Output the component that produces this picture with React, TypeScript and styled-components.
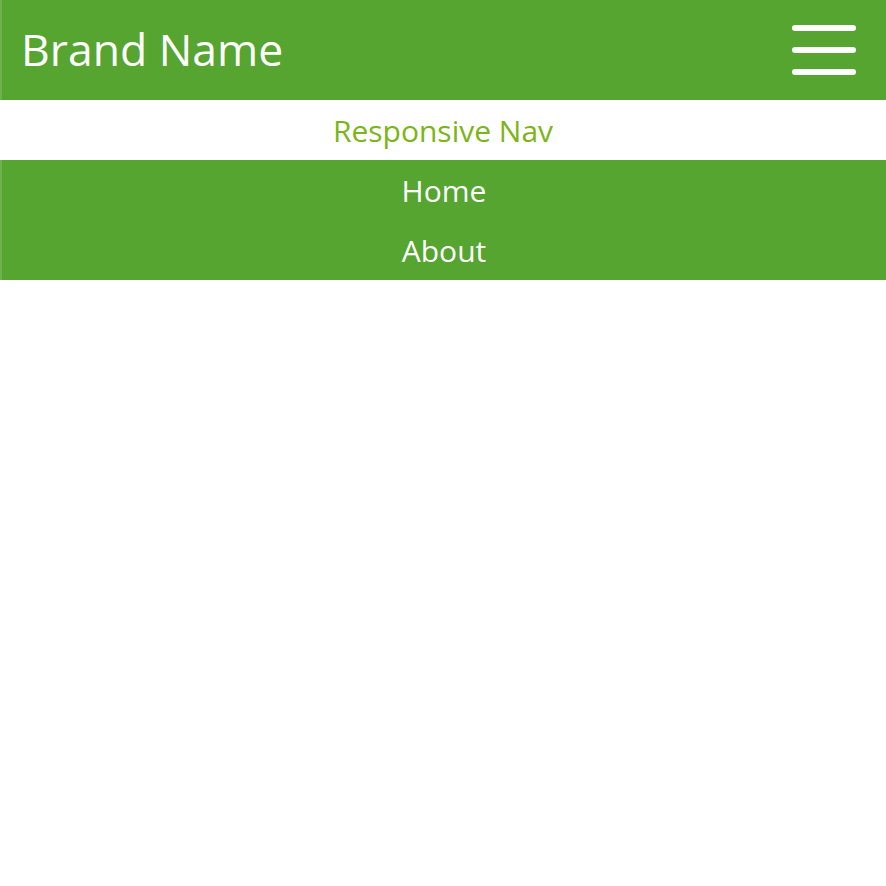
import React from "react";
import styled, { createGlobalStyle } from "styled-components";

const Global = createGlobalStyle`
  html, body { margin: 0; padding: 0; background: #ffffff; }
  body { font-family: "Open Sans", "DejaVu Sans", sans-serif; }
`;

const Header = styled.header`
  height: 100px;
  background: #55a530;
  display: flex;
  align-items: center;
  justify-content: space-between;
  padding: 0 30px 0 19px;
  border-left: 2px solid #6cb24d;
  box-sizing: border-box;
`;

const Brand = styled.div`
  color: #ffffff;
  font-size: 44.5px;
  line-height: 1;
  margin-top: -2px;
`;

const Burger = styled.button`
  display: flex;
  flex-direction: column;
  gap: 16px;
  background: none;
  border: none;
  padding: 0;
  cursor: pointer;
`;

const Bar = styled.span`
  display: block;
  width: 64px;
  height: 6px;
  border-radius: 3px;
  background: #ffffff;
`;

const Title = styled.div`
  height: 60px;
  display: flex;
  align-items: center;
  justify-content: center;
  color: #7cb518;
  font-size: 30px;
`;

const Menu = styled.nav`
  background: #55a530;
  border-left: 2px solid #6cb24d;
  display: flex;
  flex-direction: column;
`;

const Item = styled.a`
  height: 60px;
  display: flex;
  align-items: center;
  justify-content: center;
  color: #ffffff;
  font-size: 30px;
  text-decoration: none;
`;

export default function App() {
  return (
    <>
      <Global />
      <Header>
        <Brand>Brand Name</Brand>
        <Burger aria-label="menu">
          <Bar />
          <Bar />
          <Bar />
        </Burger>
      </Header>
      <Title>Responsive Nav</Title>
      <Menu>
        <Item href="#">Home</Item>
        <Item href="#">About</Item>
      </Menu>
    </>
  );
}
